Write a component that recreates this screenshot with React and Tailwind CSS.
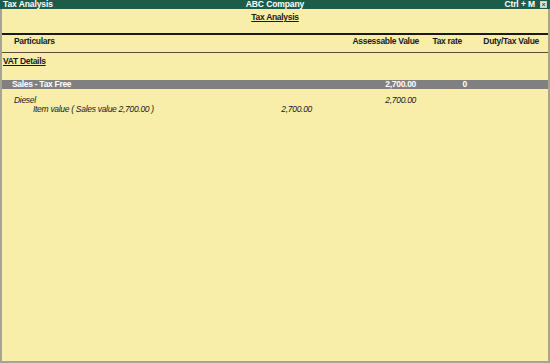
import React from "react";

// Tax Analysis report screen
const App = () => {
  return (
    <div className="w-[550px] h-[363px] flex flex-col bg-[#f8eeaa] font-['Liberation_Sans',Arial,sans-serif] text-[8.5px] leading-[10px] tracking-[-0.3px] text-[#1a1a1a] overflow-hidden whitespace-nowrap">
      {/* Title bar */}
      <div className="h-[9px] bg-[#1e5c4a] text-white font-bold grid grid-cols-[1fr_auto_1fr] items-center px-[3px] leading-[9px] tracking-[-0.1px]">
        <span>Tax Analysis</span>
        <span>ABC Company</span>
        <div className="flex justify-end items-center gap-[5px]">
          <span>Ctrl + M</span>
          <span className="w-[7px] h-[7px] border border-[#c8d0c8] bg-[#e8e8e0] flex items-center justify-center text-[#1e5c4a] text-[7px] leading-none">×</span>
        </div>
      </div>

      {/* Body */}
      <div className="flex-1 flex flex-col border-l-2 border-r-2 border-b-2 border-[#a8a490]">
        <div className="h-[24px] flex justify-center pt-[3px]">
          <span className="font-bold underline underline-offset-[1px]">Tax Analysis</span>
        </div>

        <div className="h-[2px] bg-[#1a1a1a]" />

        {/* Column headers */}
        <div className="h-[17px] flex font-bold pt-[1px]">
          <div className="flex-1 pl-[12px]">Particulars</div>
          <div className="w-[80px] text-right">Assessable Value</div>
          <div className="w-[43px] text-right">Tax rate</div>
          <div className="w-[86px] text-right pr-[9px]">Duty/Tax Value</div>
        </div>

        <div className="h-[1px] bg-[#5a5030]" />

        <div className="h-[27px] pt-[3px] pl-[1px]">
          <span className="font-bold underline underline-offset-[1px]">VAT Details</span>
        </div>

        {/* Ledger row */}
        <div className="h-[9px] bg-[#808080] text-white font-bold flex items-center leading-[9px]">
          <div className="flex-1 pl-[10px]">Sales - Tax Free</div>
          <div className="w-[80px] text-right pr-[3px]">2,700.00</div>
          <div className="w-[48px] text-right">0</div>
          <div className="w-[81px]" />
        </div>

        <div className="pt-[6px] italic">
          <div className="flex h-[9px]">
            <div className="flex-1 pl-[12px]">Diesel</div>
            <div className="w-[80px] text-right pr-[3px]">2,700.00</div>
            <div className="w-[129px]" />
          </div>
          <div className="flex h-[10px]">
            <div className="w-[270px] pl-[31px]">Item value ( Sales value 2,700.00 )</div>
            <div className="w-[40px] text-right">2,700.00</div>
            <div className="flex-1" />
          </div>
        </div>
      </div>
    </div>
  );
};

export default App;
